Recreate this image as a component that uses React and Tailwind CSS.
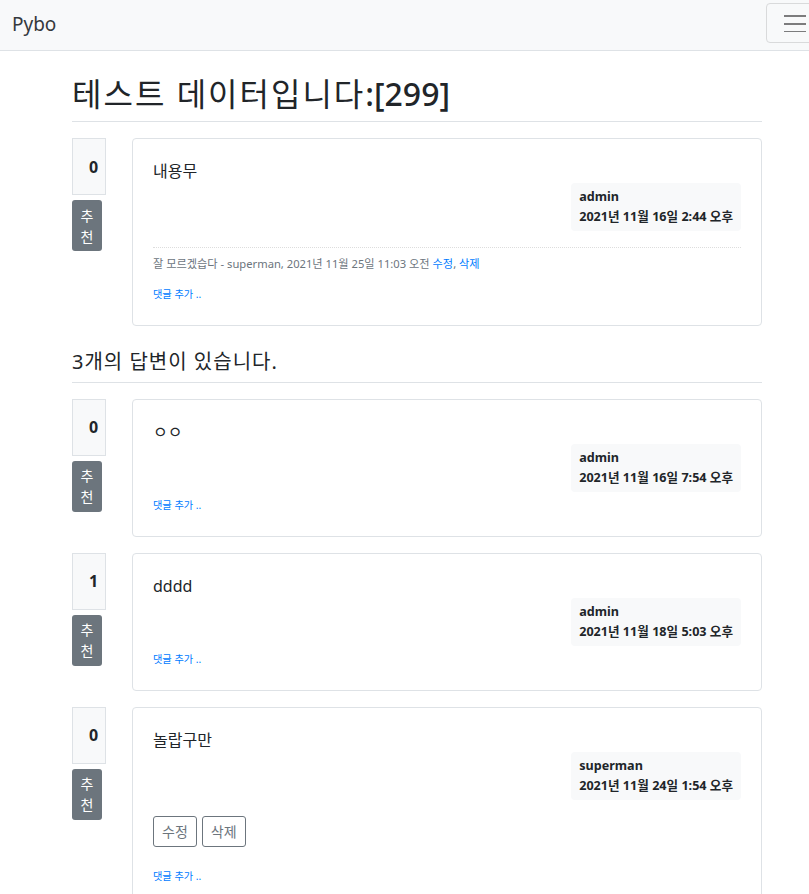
const font = { fontFamily: '"Noto Sans", "Noto Sans CJK KR", sans-serif' };

const question = {
  subject: "테스트 데이터입니다",
  num: "299",
  content: "내용무",
  author: "admin",
  date: "2021년 11월 16일 2:44 오후",
  voter: 0,
  comments: [
    { content: "잘 모르겠습다", author: "superman", date: "2021년 11월 25일 11:03 오전" },
  ],
};

const answers = [
  { id: 1, content: "ㅇㅇ", author: "admin", date: "2021년 11월 16일 7:54 오후", voter: 0 },
  { id: 2, content: "dddd", author: "admin", date: "2021년 11월 18일 5:03 오후", voter: 1 },
  { id: 3, content: "놀랍구만", author: "superman", date: "2021년 11월 24일 1:54 오후", voter: 0, mine: true },
];

function Vote({ count }) {
  return (
    <div className="w-[60px] shrink-0">
      <div className="w-[34px] h-[57px] bg-[#f8f9fa] border border-[#dee2e6] flex items-center pl-[16px] font-bold text-[16px] text-[#212529]">
        {count}
      </div>
      <button className="mt-[5px] w-[30px] h-[51px] px-2 py-1 text-[14px] leading-[21px] rounded-[3px] bg-[#6c757d] text-white text-center">
        추 천
      </button>
    </div>
  );
}

function Badge({ author, date }) {
  return (
    <div className="flex justify-end">
      <div className="bg-[#f8f9fa] rounded-[4px] p-2 text-[12.6px] leading-[12px] font-bold text-[#212529] text-left">
        <div className="mb-2">{author}</div>
        <div>{date}</div>
      </div>
    </div>
  );
}

function Post({ item, comments }) {
  return (
    <div className="flex my-4">
      <Vote count={item.voter} />
      <div className="w-[630px] border border-[#dee2e6] rounded-[4px] p-5">
        <div className="text-[16px] leading-6 text-[#212529] whitespace-pre-line">{item.content}</div>
        <Badge author={item.author} date={item.date} />
        {item.mine && (
          <div className="my-4 flex gap-[5px]">
            <button className="px-2 py-1 text-[14px] leading-[21px] border border-[#6c757d] rounded-[3px] text-[#6c757d]">수정</button>
            <button className="px-2 py-1 text-[14px] leading-[21px] border border-[#6c757d] rounded-[3px] text-[#6c757d]">삭제</button>
          </div>
        )}
        {comments && comments.length > 0 && (
          <div className="mt-4">
            {comments.map((c, i) => (
              <div key={i} className="border-t border-dotted border-[#ddd] py-2 text-[11.2px] leading-[16.8px] text-[#6c757d]">
                <span>{c.content}</span>
                <span> - {c.author}, {c.date} </span>
                <a href="#" className="text-[#007bff]">수정</a>,{" "}
                <a href="#" className="text-[#007bff]">삭제</a>
              </div>
            ))}
          </div>
        )}
        <div className="h-6 flex items-center pt-[3px]">
          <a href="#" className="text-[10.2px] leading-none text-[#007bff]">댓글 추가 ..</a>
        </div>
      </div>
    </div>
  );
}

export default function App() {
  return (
    <div className="min-h-[894px] bg-white overflow-hidden text-[#212529]" style={font}>
      {/* Navbar */}
      <nav className="h-[51px] bg-[#f8f9fa] border-b border-[#dee2e6] flex justify-between pl-3">
        <a href="#" className="text-[19px] leading-[30px] mt-[9px] text-[#212529] opacity-90">Pybo</a>
        <button className="mt-[3px] h-[40px] w-[56px] mr-[-13px] border border-[#d9dadb] rounded-[4px] flex items-center pl-[16px] shrink-0">
          <svg width="24" height="18" viewBox="0 0 24 18">
            <path d="M1 2h22M1 10h22M1 18h22" stroke="rgba(0,0,0,0.5)" strokeWidth="2" />
          </svg>
        </button>
      </nav>

      {/* Content */}
      <div className="ml-[72px] w-[690px] my-4">
        <h2 className="border-b border-[#dee2e6] py-2 text-[32px] leading-[38px] font-normal">
          <span className="tracking-[2px]">{question.subject}</span>
          <span className="font-medium">:[{question.num}]</span>
        </h2>

        <Post item={question} comments={question.comments} />

        <h5 className="border-b border-[#dee2e6] py-2 text-[20px] leading-6 font-normal tracking-[1px]">
          {answers.length}개의 답변이 있습니다.
        </h5>

        {answers.map((a) => (
          <Post key={a.id} item={a} />
        ))}
      </div>
    </div>
  );
}
